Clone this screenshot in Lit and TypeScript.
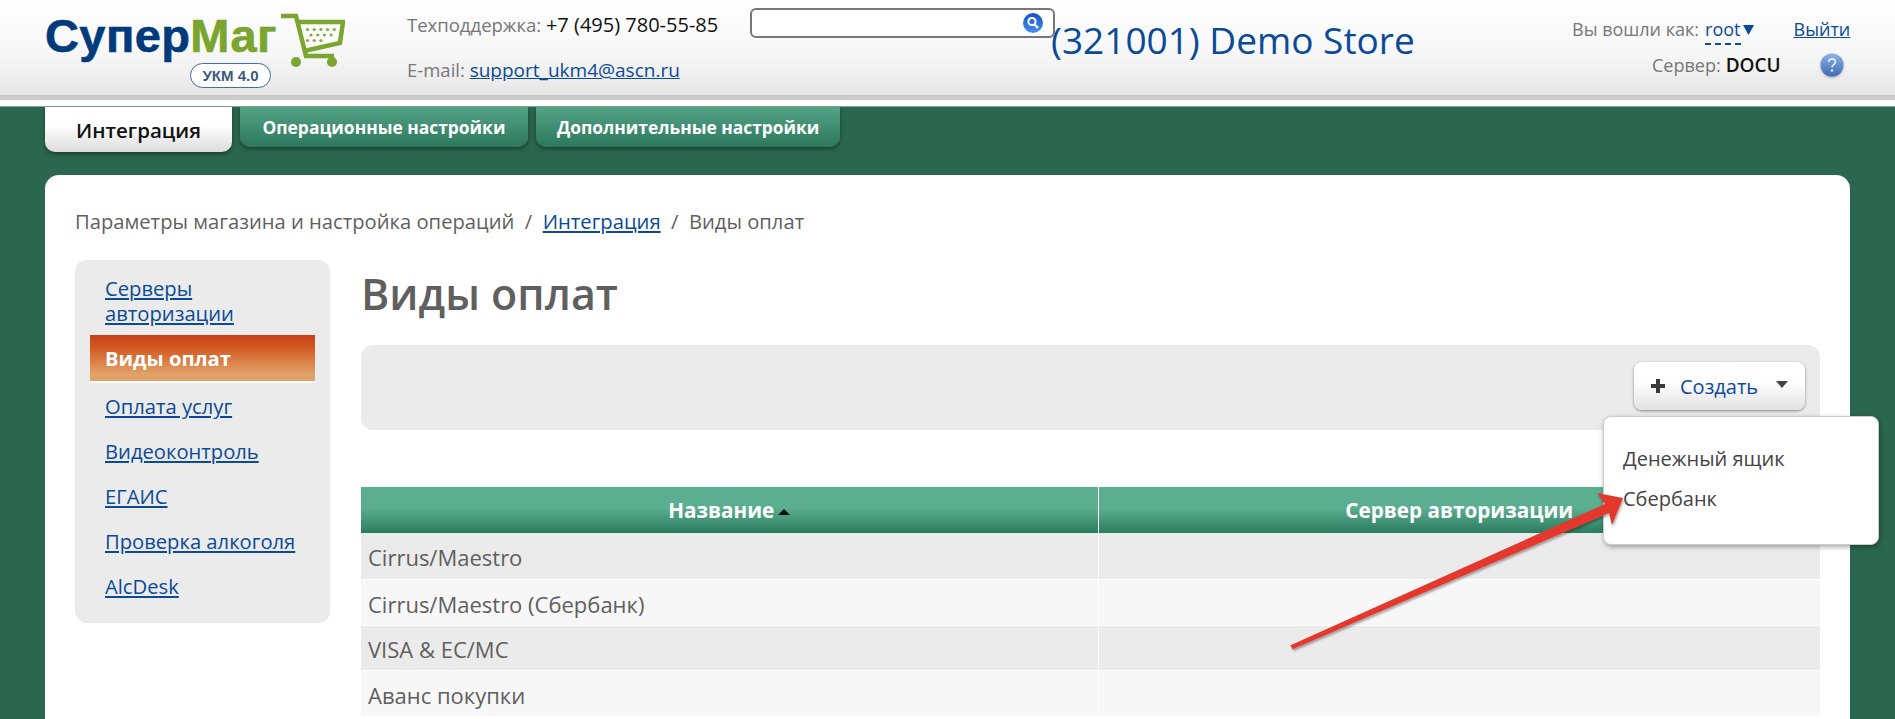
import { LitElement, html, css, svg } from "lit";
import { customElement } from "lit/decorators.js";

const NAV = ["Оплата услуг", "Видеоконтроль", "ЕГАИС", "Проверка алкоголя", "AlcDesk"];
const ROWS = ["Cirrus/Maestro", "Cirrus/Maestro (Сбербанк)", "VISA & EC/MC", "Аванс покупки"];

const cartDots = () => {
  const out = [];
  const rows: [number, number, number][] = [[307.500, 29.500, 5], [311, 35, 4], [307.500, 40.500, 3]];
  for (const [x, y, n] of rows)
    for (let i = 0; i < n; i++)
      out.push(svg`<circle cx=${x + i * 6.7} cy=${y} r="1.6" fill="#8aa85a"></circle>`);
  return out;
};

@customElement("app-root")
export class AppRoot extends LitElement {
  static styles = css`
    :host {
      display: block;
      position: relative;
      height: 719px;
      overflow: hidden;
      background: #2b6650;
      font-family: "Open Sans", "Noto Sans", sans-serif;
      font-size: 18px;
      color: #5f5f5f;
    }
    a { color: #0a4a96; text-decoration: underline; }

    .header {
      height: 95px;
      display: flex;
      padding-left: 45px;
      background: linear-gradient(#ffffff, #f6f6f6 60%, #e6e6e6);
      border-bottom: 5px solid #cbcbcb;
    }
    .strip { height: 6px; background: #fff; border-bottom: 1px solid #7fa897; }

    .logo { width: 300px; height: 95px; display: flex; flex: none; }
    .logo-text { width: 236px; display: flex; flex-direction: column; align-items: flex-end; }
    .word {
      align-self: flex-start;
      font-family: "Liberation Sans", Arial, sans-serif;
      font-weight: 700;
      font-size: 47px;
      line-height: 54px;
      margin-top: 9px;
      letter-spacing: 0.4px;
      color: #003a7a;
      white-space: nowrap;
      -webkit-text-stroke: 0.6px currentColor;
    }
    .word b { color: #7aa52f; }
    .pill {
      box-sizing: border-box;
      margin-top: 0;
      margin-right: 10px;
      width: 81px;
      height: 25px;
      border: 1.5px solid #3f6ea3;
      border-radius: 13px;
      background: #fff;
      display: flex;
      align-items: center;
      justify-content: center;
      font-family: "Liberation Sans", Arial, sans-serif;
      font-weight: 700;
      font-size: 15px;
      color: #3d5a80;
    }
    .cart { margin-top: 13px; flex: none; }

    .contacts { margin-left: 62px; width: 343px; flex: none; white-space: nowrap; font-size: 18.500px; color: #777; }
    .contacts div { line-height: 24px; margin-top: 13px; }
    .contacts div + div { margin-top: 21px; }
    .contacts b { font-weight: 400; font-size: 20px; color: #111; }
    .contacts a { font-size: 19px; }

    .search {
      box-sizing: border-box;
      flex: none;
      width: 305px;
      height: 30px;
      margin-top: 8px;
      border: 2px solid #777;
      border-radius: 6px;
      background: #fff;
      display: flex;
      justify-content: flex-end;
      align-items: flex-end;
    }
    .search svg { margin: 0 8px 0 0; }

    .store {
      flex: none;
      margin-left: -4px;
      width: 521px;
      margin-top: 15px;
      font-size: 37px;
      line-height: 50px;
      color: #0a4a96;
      white-space: nowrap;
    }

    .user { flex: 1; font-size: 18px; color: #777; white-space: nowrap; }
    .user-line { display: flex; line-height: 24px; }
    .user-line.one { margin-top: 17px; align-items: flex-start; }
    .user-line.two { margin-top: 7px; padding-left: 80px; align-items: center; }
    .root { color: #0a4a96; border-bottom: 2px dashed #0a4a96; margin-left: 6px; line-height: 25px; height: 26px; }
    .tri { margin: 8px 0 0 2px; flex: none; }
    .logout { margin-left: 40px; }
    .user-line b { font-weight: 600; color: #111; margin-left: 5px; width: 55px; font-size: 19px; }
    .help { margin-left: 39px; filter: drop-shadow(0 1px 1px rgba(0, 0, 0, 0.3)); }

    .tabs { height: 68px; display: flex; padding-left: 45px; gap: 8px; align-items: flex-start; }
    .tab {
      height: 40px;
      box-sizing: border-box;
      padding: 0 22.500px;
      display: flex;
      align-items: center;
      font-size: 17.400px;
      font-weight: 700;
      color: #fff;
      border-radius: 0 0 10px 10px;
      background: linear-gradient(#54a386, #2d785d);
      box-shadow: 0 2px 4px rgba(0, 0, 0, 0.4);
    }
    .tab:last-child { padding: 0 21px; }
    .tab.on {
      height: 45px;
      padding: 0 31px;
      font-size: 20.500px;
      font-weight: 600;
      color: #111;
      background: linear-gradient(#ffffff, #ffffff 40%, #dcdcdc);
    }

    .card {
      margin: 0 45px;
      box-sizing: border-box;
      height: 700px;
      background: #fff;
      border-radius: 14px;
      padding: 31px 30px 0;
    }
    .crumbs { line-height: 30px; height: 54px; font-size: 20.200px; color: #5f5f5f; white-space: pre; }
    .body { display: flex; gap: 31px; align-items: flex-start; }

    .side {
      width: 255px;
      height: 363px;
      box-sizing: border-box;
      flex: none;
      padding: 16px 15px 15px;
      border-radius: 12px;
      background: #ebebeb;
      font-size: 20.200px;
    }
    .side a { display: block; padding: 0 15px; line-height: 25px; }
    .side a.first { padding-bottom: 9px; }
    .side a.item { margin-top: 20px; }
    .side .active + a.item { margin-top: 11px; }
    .active {
      height: 46px;
      box-sizing: content-box;
      display: flex;
      align-items: center;
      padding: 0 15px;
      font-weight: 700;
      color: #fff;
      background: linear-gradient(#c8401a, #d2571f 25%, #e0a268 85%);
      border-bottom: 2px solid #fff;
    }

    .main { width: 1459px; flex: none; }
    h1 { margin: 0; font-size: 43px; line-height: 60px; height: 81px; font-weight: 600; padding-top: 4px; color: #5f5f5f; }
    .bar {
      height: 85px;
      border-radius: 12px;
      background: #ebebeb;
      display: flex;
      justify-content: flex-end;
      padding: 17px 15px 0 0;
      box-sizing: border-box;
    }
    .btn-wrap { position: relative; }
    .btn {
      width: 171px;
      height: 48px;
      box-sizing: border-box;
      border-radius: 8px;
      background: linear-gradient(#ffffff, #ffffff 40%, #e2e2e2);
      box-shadow: 0 1px 3px rgba(0, 0, 0, 0.45);
      display: flex;
      align-items: center;
      padding: 0 17px;
      font-size: 20px;
      color: #0a4a96;
    }
    .btn .label { margin-left: 15px; flex: 1; }
    .btn .caret { margin-bottom: 4px; }
    .menu {
      position: absolute;
      left: -31px;
      top: 54px;
      width: 276px;
      height: 129px;
      box-sizing: border-box;
      padding: 22px 19px;
      border-radius: 8px;
      border: 1px solid #ccc;
      background: #fff;
      box-shadow: 1px 2px 5px rgba(0, 0, 0, 0.35);
      font-size: 20px;
      color: #444;
      z-index: 2;
    }
    .menu div { line-height: 40px; }

    table { margin-top: 57px; width: 100%; border-collapse: collapse; table-layout: fixed; }
    th {
      height: 46px;
      padding: 0;
      font-size: 20.700px;
      font-weight: 700;
      color: #fff;
      background: linear-gradient(#5cae91, #5cae91 45%, #2b7c5e);
    }
    th + th { border-left: 1px solid #fff; }
    td {
      height: 46px;
      padding: 3px 7px 0;
      box-sizing: border-box;
      font-size: 22px;
      color: #5f5f5f;
      background: #ebebeb;
      border-bottom: 1px solid #fff;
    }
    td + td { border-left: 1px solid #fff; }
    tr:nth-child(even) td { background: #f7f7f7; }
    tr:nth-child(3) td { height: 45px; }
    .sort {
      display: inline-block;
      margin-left: 4px;
      vertical-align: 3px;
      border: 6px solid transparent;
      border-top: 0;
      border-bottom: 6px solid #111;
    }

    .arrow { position: absolute; left: 0; top: 0; pointer-events: none; z-index: 3; }
  `;

  render() {
    return html`
      <div class="header">
        <div class="logo">
          <div class="logo-text">
            <div class="word">Супер<b>Маг</b></div>
            <div class="pill">УКМ 4.0</div>
          </div>
          <svg class="cart" width="64" height="58" viewBox="281 13 64 58">
            <path d="M300 21H344L341 42L306 52Z" fill="#fbfcf6"></path>
            <g fill="none" stroke="#7aa52f" stroke-width="4.5" stroke-linejoin="miter">
              <path d="M281 16H296L306 56H334"></path>
              <path d="M298 22H343L340 43L304 51"></path>
            </g>
            ${cartDots()}
            <circle cx="296" cy="62" r="5" fill="#7aa52f"></circle>
            <circle cx="332" cy="62" r="5" fill="#7aa52f"></circle>
          </svg>
        </div>
        <div class="contacts">
          <div>Техподдержка: <b>+7 (495) 780-55-85</b></div>
          <div>E-mail: <a href="#">support_ukm4@ascn.ru</a></div>
        </div>
        <div class="search">
          <svg width="24" height="25" viewBox="0 0 24 25">
            <defs><linearGradient id="sb" x1="0" y1="0" x2="0" y2="1"><stop offset="0" stop-color="#1450c8"></stop><stop offset="1" stop-color="#4a90f0"></stop></linearGradient></defs>
            <circle cx="12" cy="12" r="10" fill="url(#sb)"></circle>
            <circle cx="11" cy="10.500" r="3.600" fill="none" stroke="#fff" stroke-width="2"></circle>
            <path d="M13.500 13.500L17 17" stroke="#fff" stroke-width="2.400"></path>
          </svg>
        </div>
        <div class="store">(321001) Demo Store</div>
        <div class="user">
          <div class="user-line one">
            <span>Вы вошли как:</span><span class="root">root</span>
            <svg class="tri" width="11" height="10" viewBox="0 0 11 10"><path d="M0 0h11L5.500 10z" fill="#0a4a96"></path></svg>
            <a class="logout" href="#">Выйти</a>
          </div>
          <div class="user-line two">
            <span>Сервер:</span><b>DOCU</b>
            <svg class="help" width="24" height="26" viewBox="0 0 24 26">
              <defs><linearGradient id="hb" x1="0" y1="0" x2="0" y2="1"><stop offset="0" stop-color="#8fb2e4"></stop><stop offset="1" stop-color="#3c6cb4"></stop></linearGradient></defs>
              <circle cx="12" cy="13" r="11.500" fill="url(#hb)"></circle>
              <path d="M8.800 10c0-4.200 6.600-4.200 6.600 0 0 2.600-3.300 2.600-3.300 5.200" fill="none" stroke="#dfe9f8" stroke-width="1.800"></path>
              <circle cx="12" cy="18.500" r="1.200" fill="#dfe9f8"></circle>
            </svg>
          </div>
        </div>
      </div>
      <div class="strip"></div>
      <div class="tabs">
        <div class="tab on">Интеграция</div>
        <div class="tab">Операционные настройки</div>
        <div class="tab">Дополнительные настройки</div>
      </div>
      <div class="card">
        <div class="crumbs">Параметры магазина и настройка операций  /  <a href="#">Интеграция</a>  /  Виды оплат</div>
        <div class="body">
          <div class="side">
            <a class="first" href="#">Серверы авторизации</a>
            <div class="active">Виды оплат</div>
            ${NAV.map((n) => html`<a class="item" href="#">${n}</a>`)}
          </div>
          <div class="main">
            <h1>Виды оплат</h1>
            <div class="bar">
              <div class="btn-wrap">
                <div class="btn">
                  <svg width="14" height="14" viewBox="0 0 14 14"><path d="M5 0h4v5h5v4H9v5H5V9H0V5h5z" fill="#3a3a3a"></path></svg>
                  <span class="label">Создать</span>
                  <svg class="caret" width="12" height="7" viewBox="0 0 12 7"><path d="M0 0h12L6 7z" fill="#444"></path></svg>
                </div>
                <div class="menu">
                  <div>Денежный ящик</div>
                  <div>Сбербанк</div>
                </div>
              </div>
            </div>
            <table>
              <colgroup><col style="width:737px" /><col /></colgroup>
              <thead><tr><th>Название<span class="sort"></span></th><th>Сервер авторизации</th></tr></thead>
              <tbody>${ROWS.map((r) => html`<tr><td>${r}</td><td></td></tr>`)}</tbody>
            </table>
          </div>
        </div>
      </div>
      <svg class="arrow" width="1895" height="719" viewBox="0 0 1895 719">
        <defs><filter id="s" x="-5%" y="-5%" width="110%" height="110%"><feDropShadow dx="1" dy="2" stdDeviation="1.200" flood-color="#000" flood-opacity="0.35"></feDropShadow></filter></defs>
        <path filter="url(#s)" d="M1290 645.500L1605 504L1597 493L1623 498L1612 525L1609 513L1293 649Z" fill="#e4392f"></path>
      </svg>
    `;
  }
}
